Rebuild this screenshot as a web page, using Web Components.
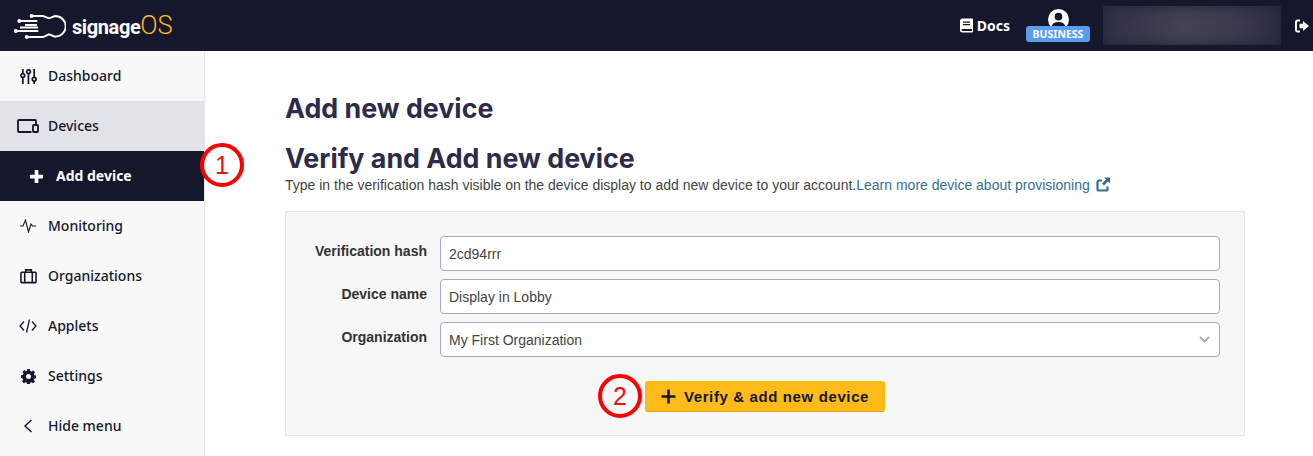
<!DOCTYPE html>
<html>
<head>
<meta charset="utf-8">
<title>signageOS</title>
<style>
    html, body { margin: 0; padding: 0; height: 100%; overflow: hidden; background: #fff; }
    body { font-family: "Liberation Sans", sans-serif; }
</style>
</head>
<body>
<template id="icons">
    <svg data-i="dashboard" viewBox="0 0 18 18" fill="none" stroke="currentColor" stroke-width="1.800"><path d="M3 1v5M3 10v7M9 1v1M9 6v11M15 1v9M15 14v3"/><circle cx="3" cy="8" r="2"/><circle cx="9" cy="4" r="2"/><circle cx="15" cy="12" r="2"/></svg>
    <svg data-i="devices" viewBox="0 0 22 14" fill="none" stroke="currentColor" stroke-width="1.800"><path d="M14.500 13H1.900A.9.9 0 0 1 1 12.100V1.900A.9.9 0 0 1 1.900 1h16.200a.9.9 0 0 1 .9.9V5"/><rect x="16" y="6" width="5" height="7" rx=".8"/></svg>
    <svg data-i="plus" viewBox="0 0 16 16" fill="currentColor"><rect x="6" y="1" width="4" height="14" rx="1"/><rect x="1" y="6" width="14" height="4" rx="1"/></svg>
    <svg data-i="monitoring" viewBox="0 0 18 14" fill="none" stroke="currentColor" stroke-width="1.100"><path d="M1 7h3l2.500-6 3 12 2.500-8 1.500 2H17"/></svg>
    <svg data-i="organizations" viewBox="0 0 18 16" fill="none" stroke="currentColor" stroke-width="1.700"><rect x="1" y="4" width="16" height="11" rx=".8"/><path d="M6 4V1.500h6V4M5 4v11M13 4v11"/></svg>
    <svg data-i="applets" viewBox="0 0 18 14" fill="none" stroke="currentColor" stroke-width="1.300"><path d="M5 2.500 1 7l4 4.500M13 2.500 17 7l-4 4.500M10.500 .5l-3 13"/></svg>
    <svg data-i="settings" viewBox="0 0 16 16"><path fill="currentColor" fill-rule="evenodd" d="M6.600 0h2.800l.4 2.100 1.300.6 1.800-1.200 2 2-1.200 1.800.6 1.300 2.100.4v2.800l-2.100.4-.6 1.300 1.200 1.800-2 2-1.800-1.200-1.300.6-.4 2.100H6.600l-.4-2.100-1.300-.6-1.800 1.200-2-2 1.200-1.800-.6-1.300L0 9.400V6.600l2.100-.4.600-1.300L1.500 3.100l2-2 1.800 1.200 1.300-.6zM8 5.300a2.700 2.700 0 1 0 0 5.400 2.700 2.700 0 0 0 0-5.400z"/></svg>
    <svg data-i="hide" viewBox="0 0 10 14" fill="none" stroke="currentColor" stroke-width="1.500"><path d="M8.500 1 2 7l6.500 6"/></svg>
</template>

<so-app>
    <so-header slot="header"></so-header>
    <so-sidebar slot="sidebar">
        <so-nav-item icon="dashboard">Dashboard</so-nav-item>
        <so-nav-item icon="devices" state="open">Devices</so-nav-item>
        <so-nav-item icon="plus" state="active">Add device</so-nav-item>
        <so-nav-item icon="monitoring">Monitoring</so-nav-item>
        <so-nav-item icon="organizations">Organizations</so-nav-item>
        <so-nav-item icon="applets">Applets</so-nav-item>
        <so-nav-item icon="settings">Settings</so-nav-item>
        <so-nav-item icon="hide">Hide menu</so-nav-item>
    </so-sidebar>
    <so-device-form></so-device-form>
    <so-callout slot="overlay" style="left:200px;top:143px">1</so-callout>
    <so-callout slot="overlay" style="left:598px;top:374px">2</so-callout>
</so-app>

<script type="text/javascript">
const HEADING_FONT = '"Inter", "Noto Sans", sans-serif';
const NAV_FONT = '"Noto Sans", "Open Sans", sans-serif';

class SoApp extends HTMLElement{
    constructor(){
        super();
        this.attachShadow({mode: 'open'});
        this.shadowRoot.innerHTML = `
        <style>
            :host { display: block; position: relative; width: 100%; height: 456px; overflow: hidden; }
            .body { display: flex; height: 405px; }
            main { flex: 1; min-width: 0; }
        </style>
        <slot name="header"></slot>
        <div class="body">
            <slot name="sidebar"></slot>
            <main><slot></slot></main>
        </div>
        <slot name="overlay"></slot>`;
    }
}

class SoHeader extends HTMLElement{
    constructor(){
        super();
        this.attachShadow({mode: 'open'});
        this.shadowRoot.innerHTML = `
        <style>
            :host { display: flex; align-items: center; height: 51px; background: #15172d; color: #fff; }
            .logo { display: flex; align-items: center; margin-left: 14px; }
            .logo svg { width: 52px; height: 26px; display: block; }
            .word { margin-left: 6px; font: 700 20px/1 "Roboto", sans-serif; letter-spacing: -.4px; }
            .word b { font: 300 25.500px/1 "Roboto", sans-serif; color: #fdbb19; letter-spacing: 0; }
            .right { margin-left: auto; display: flex; align-items: center; }
            .docs { display: flex; align-items: center; gap: 4px; font: 700 14px/1 ${NAV_FONT}; margin-right: 16px; }
            .docs svg { width: 13px; height: 15px; }
            .plan { position: relative; width: 64px; height: 39px; margin-right: 13px; }
            .plan svg { position: absolute; left: 22px; top: 3px; width: 21px; height: 21px; }
            .badge { position: absolute; left: 0; top: 20px; width: 64px; height: 16px; border-radius: 3px; background: #5a9cf0; font: 700 10.500px/16px ${NAV_FONT}; text-align: center; }
            .blur { width: 178px; height: 39px; background-image: linear-gradient(90deg, #2f3044, #414253 45%, #3a3b4e 75%, #2a2c40); box-shadow: inset 0 0 12px #20223a; margin-right: 14px; }
            .out { width: 14px; height: 14px; margin-right: 4px; }
        </style>
        <div class="logo">
            <svg viewBox="0 0 52 26" fill="none" stroke="#fff" stroke-width="1.900">
                <path d="M17.700 3H29l6 2.300L41 3c6 0 10.700 4.500 10.700 10.300S47 23.700 41 23.700l-6-2.400L29 24H12.700"/>
                <path d="M5.300 8h18M11 12h12M6 14.500h18M0 18h24.300"/>
                <g fill="#fff" stroke="none"><circle cx="5.300" cy="8" r="2"/><circle cx="1.800" cy="18" r="2"/><circle cx="12.700" cy="24" r="2"/><circle cx="17.700" cy="3" r="2"/></g>
            </svg>
            <span class="word">signage<b>OS</b></span>
        </div>
        <div class="right">
            <div class="docs">
                <svg viewBox="0 0 13 14"><path fill="#fff" fill-rule="evenodd" d="M2.500 0H12a1 1 0 0 1 1 1v12a1 1 0 0 1-1 1H2.500A2.500 2.500 0 0 1 0 11.500v-9A2.500 2.500 0 0 1 2.500 0zM3 3v1.200h7V3zm0 2.500v1.200h7V5.500zM2.500 10.500a1 1 0 0 0 0 2H12v-2z"/></svg>
                Docs
            </div>
            <div class="plan">
                <svg viewBox="0 0 22 22"><path fill="#fff" fill-rule="evenodd" d="M11 0a11 11 0 1 1 0 22 11 11 0 0 1 0-22zm0 4a4 4 0 1 0 0 8 4 4 0 0 0 0-8zM4 18c1.500 2 4 3 7 3s5.500-1 7-3c-.5-3-3-4.500-7-4.500S4.500 15 4 18z"/></svg>
                <div class="badge">BUSINESS</div>
            </div>
            <div class="blur"></div>
            <svg class="out" viewBox="0 0 14 14" fill="none" stroke="#fff" stroke-width="2"><path d="M5 1.500H2.500a1.500 1.500 0 0 0-1.500 1.500v8a1.500 1.500 0 0 0 1.500 1.500H5"/><path fill="#fff" stroke="none" d="M8 2 14 7l-6 5V9.300H4.500V4.700H8z"/></svg>
        </div>`;
    }
}

class SoSidebar extends HTMLElement{
    constructor(){
        super();
        this.attachShadow({mode: 'open'});
        this.shadowRoot.innerHTML = `
        <style>
            :host { display: block; flex: 0 0 204px; width: 204px; background: #f8f8f8; border-right: 1px solid #e5e5ea; }
        </style>
        <slot></slot>`;
    }
}

class SoNavItem extends HTMLElement{
    constructor(){
        super();
        this.attachShadow({mode: 'open'});
        this.shadowRoot.innerHTML = `
        <style>
            :host { display: flex; align-items: center; height: 50px; color: #15172d; font: 500 14px/1 ${NAV_FONT}; }
            :host([state="open"]) { background: #e2e3e8; }
            :host([state="active"]) { background: #15172d; color: #fff; font-weight: 700; }
            .ic { width: 48px; display: flex; justify-content: center; padding-left: 8px; box-sizing: border-box; flex: none; }
            :host([state="active"]) .ic { width: 56px; padding-left: 16px; }
            svg { display: block; }
        </style>
        <span class="ic"></span><slot></slot>`;
    }
    connectedCallback(){
        const name = this.getAttribute('icon');
        const icon = document.getElementById('icons').content.querySelector(`[data-i="${name}"]`).cloneNode(true);
        const sizes = {dashboard: [17,17], devices: [22,14], plus: [15,15], monitoring: [18,14], organizations: [17,16], applets: [18,14], settings: [15,15], hide: [10,14]};
        icon.setAttribute('width', sizes[name][0]);
        icon.setAttribute('height', sizes[name][1]);
        this.shadowRoot.querySelector('.ic').appendChild(icon);
    }
}

class SoFormRow extends HTMLElement{
    constructor(){
        super();
        this.attachShadow({mode: 'open'});
        this.shadowRoot.innerHTML = `
        <style>
            :host { display: grid; grid-template-columns: 141px 780px; column-gap: 13px; font-size: 14px; }
            label { text-align: right; font-weight: 700; color: #333; line-height: 16px; padding-top: 7px; }
            .field { position: relative; box-sizing: border-box; height: 35px; padding: 0 8px; background: #fff; border: 1px solid #aaa7bf; border-radius: 4px; color: #444; line-height: 34px; }
            svg { position: absolute; right: 9px; top: 13px; width: 11px; height: 7px; }
        </style>
        <label></label>
        <div class="field"><slot></slot></div>`;
    }
    connectedCallback(){
        this.shadowRoot.querySelector('label').textContent = this.getAttribute('label');
        if(this.hasAttribute('select')){
            this.shadowRoot.querySelector('.field').insertAdjacentHTML('beforeend',
                '<svg viewBox="0 0 11 7" fill="none" stroke="#aaa7bf" stroke-width="1.800"><path d="M1 1l4.500 4.500L10 1"/></svg>');
        }
    }
}

class SoButton extends HTMLElement{
    constructor(){
        super();
        this.attachShadow({mode: 'open'});
        this.shadowRoot.innerHTML = `
        <style>
            :host { display: flex; align-items: center; justify-content: center; gap: 8px; box-sizing: border-box; width: 240px; height: 31px; background: #fdbb19; border-bottom: 1px solid #e3a60f; border-radius: 3px; color: #15172d; font: 700 15px/1 "Liberation Sans", sans-serif; letter-spacing: .62px; }
            svg { width: 15px; height: 15px; }
        </style>
        <svg viewBox="0 0 15 15" fill="currentColor"><rect x="6.200" y="0.500" width="2.600" height="14" rx=".5"/><rect x="0.500" y="6.200" width="14" height="2.600" rx=".5"/></svg>
        <slot></slot>`;
    }
}

class SoDeviceForm extends HTMLElement{
    constructor(){
        super();
        this.attachShadow({mode: 'open'});
        this.shadowRoot.innerHTML = `
        <style>
            :host { display: block; padding: 36px 68px 0 80px; }
            h1, h2 { margin: 0; color: #2b2c4b; font: 700 26.800px/42px ${HEADING_FONT}; }
            h2 { margin-top: 12px; line-height: 34px; }
            p { margin: 1px 0 17px; font-size: 14px; line-height: 18px; color: #444; }
            a { color: #33708f; text-decoration: none; }
            a svg { width: 14px; height: 15px; vertical-align: -2px; margin-left: 2px; }
            .panel { box-sizing: border-box; height: 225px; padding: 24px 0 0 0; background: #f7f7f7; border: 1px solid #e5e5e8; }
            .rows { display: grid; row-gap: 8px; }
            .actions { display: flex; justify-content: center; margin-top: 24px; }
        </style>
        <h1>Add new device</h1>
        <h2>Verify and Add new device</h2>
        <p>Type in the verification hash visible on the device display to add new device to your account.<a href="#">Learn more device about provisioning <svg viewBox="0 0 14 14"><path fill="none" stroke="#33708f" stroke-width="2.200" d="M6 3H3a1.500 1.500 0 0 0-1.500 1.500v7A1.500 1.500 0 0 0 3 13h7a1.500 1.500 0 0 0 1.500-1.500V9"/><path fill="#33708f" d="M8 0h6v6l-2-2-4 4-2-2 4-4z"/></svg></a></p>
        <div class="panel">
            <div class="rows">
                <so-form-row label="Verification hash">2cd94rrr</so-form-row>
                <so-form-row label="Device name">Display in Lobby</so-form-row>
                <so-form-row label="Organization" select>My First Organization</so-form-row>
            </div>
            <div class="actions"><so-button>Verify &amp; add new device</so-button></div>
        </div>`;
    }
}

class SoCallout extends HTMLElement{
    constructor(){
        super();
        this.attachShadow({mode: 'open'});
        this.shadowRoot.innerHTML = `
        <style>
            :host { position: absolute; display: flex; align-items: center; justify-content: center; box-sizing: border-box; width: 44px; height: 44px; border: 4px solid #f00; border-radius: 50%; color: #e11; font: 400 25px/1 "Liberation Sans", sans-serif; }
        </style>
        <slot></slot>`;
    }
}

window.customElements.define("so-app", SoApp);
window.customElements.define("so-header", SoHeader);
window.customElements.define("so-sidebar", SoSidebar);
window.customElements.define("so-nav-item", SoNavItem);
window.customElements.define("so-form-row", SoFormRow);
window.customElements.define("so-button", SoButton);
window.customElements.define("so-device-form", SoDeviceForm);
window.customElements.define("so-callout", SoCallout);
</script>
</body>
</html>
